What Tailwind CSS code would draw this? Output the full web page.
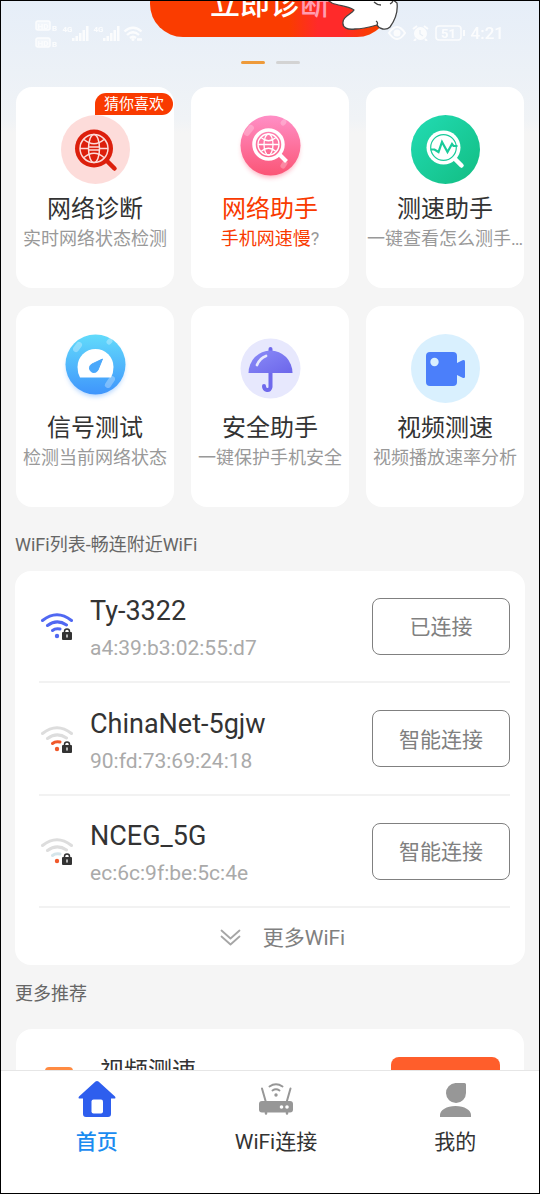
<!DOCTYPE html>
<html lang="zh-CN">
<head>
<meta charset="utf-8">
<meta name="viewport" content="width=device-width, initial-scale=1">
<title>WiFi助手</title>
<script src="https://cdn.jsdelivr.net/npm/@tailwindcss/browser@4"></script>
</head>
<body class="flex h-screen flex-col overflow-hidden border border-black bg-[#f5f5f5] font-['Roboto','Noto_Sans_CJK_SC',sans-serif] text-[#333333]">
<main class="min-h-0 flex-1 overflow-hidden bg-[linear-gradient(#e6eef8_0px,#f0f3f6_118px,#f5f5f5_132px)]">

  <header class="relative flex h-[86px] flex-col items-center overflow-hidden">
    <button type="button" class="-mt-[30px] h-[66px] w-[240px] shrink-0 rounded-full bg-[linear-gradient(90deg,#fa3c00_0%,#fa3c00_58%,#ff2a2a_70%,#ff2a2a_80%,#fa3c00_92%)] text-[30px] leading-[66px] font-medium text-white">立即诊<span class="text-[#ff9db0]">断</span></button>
    <div class="mt-6 flex gap-[11px]">
      <span class="h-[3px] w-6 rounded-full bg-[#ee9a3a]"></span>
      <span class="h-[3px] w-6 rounded-full bg-[#d3d3d3]"></span>
    </div>
    <svg class="absolute top-0 left-[324px] h-8 w-[76px]" viewBox="325 1 76 32" fill="#fff" stroke="#444" stroke-width="1.3" stroke-linejoin="round" aria-hidden="true">
      <path d="M326 -1 L332 3 C339 6 348 6 354 10 C352 14 343 16 343 22 C342 28 348 30 355 29 C362 29 370 27 377 25 C379 29 386 31 390 27 C395 20 398 11 397 3 L392 -1Z"/>
      <path fill="none" d="M377 25 C378 23 378 22 376 21 M374 2 C376 4 378 5 381 5 M390 4 C392 3 393 2 393 0"/>
    </svg>
    <div class="absolute inset-x-0 top-4 flex items-center justify-between pr-[35px] pl-[33px] text-white opacity-85">
      <svg class="h-8 w-[110px]" viewBox="34 17 110 32" fill="#fff" aria-hidden="true">
        <g fill="#fff" fill-opacity=".5" stroke="#fff" stroke-width="1.500"><rect x="36" y="21" width="14" height="9" rx="2"/><rect x="36" y="38" width="14" height="9" rx="2"/></g>
        <g font-family="Roboto" font-weight="700"><g font-size="8"><text x="37.500" y="28.500">HD</text><text x="37.500" y="45.500">HD</text><text x="52" y="31">B</text><text x="52" y="47">B</text></g><g font-size="8"><text x="62.500" y="32">4G</text><text x="93.500" y="32">4G</text></g></g>
        <path d="M72 38h2.500v3h-2.500zM75.500 36h2.500v5h-2.500zM79 33h2.500v8h-2.500zM82.500 30h2.500v11h-2.500zM86 26h2.500v15h-2.500zM103 38h2.500v3h-2.500zM106.500 36h2.500v5h-2.500zM110 33h2.500v8h-2.500zM113.500 30h2.500v11h-2.500zM117 26h2.500v15h-2.500z"/>
        <g fill="none" stroke="#fff" stroke-width="2.300"><path d="M124.500 31.500Q133 24 141.500 31.500M127 35Q133 29.500 139 35M130 38Q133 35.500 136 38M137 39.500h5"/></g><circle cx="133" cy="39.500" r="1.500"/>
      </svg>
      <div class="flex items-center gap-1.5">
        <svg class="h-4 w-[78px]" viewBox="389 25 78 16" fill="none" stroke="#fff" stroke-width="2" aria-hidden="true">
          <path d="M391 33Q399 21 407 33Q399 45 391 33Z"/><circle cx="399" cy="33" r="2.500" fill="#fff"/>
          <circle cx="422.500" cy="33.500" r="5.500" fill="#fff"/><path d="M415 29l4-3M430 29l-4-3M418 39l-2 2M427 39l2 2"/><path stroke="#e8eff6" stroke-width="1.300" d="M422 30v4l3 2"/>
          <rect x="438" y="26" width="25" height="14" rx="3" stroke-width="1.500"/><path d="M466 30v6"/>
          <text x="443" y="38" font-size="13" font-family="Roboto" font-weight="700" fill="#fff" stroke="none">51</text>
        </svg>
        <span class="text-[17px] leading-5 font-medium">4:21</span>
      </div>
    </div>
  </header>

  <section class="grid grid-cols-3 gap-x-[17px] gap-y-[18px] px-[15px]" aria-label="工具">
    <a href="#" class="relative flex h-[201px] flex-col items-center rounded-2xl bg-white pt-7 whitespace-nowrap">
      <span class="absolute top-1.5 right-px h-[22px] rounded-full rounded-bl-none bg-[#f93a00] px-[9px] text-[15px] leading-[23px] text-white">猜你喜欢</span>
      <svg class="size-[69px]" viewBox="0 0 69 69" fill="none" aria-hidden="true">
        <circle cx="34.500" cy="34.500" r="34.500" fill="#fddcda"/>
        <path d="M45 45l8.500 8.500" stroke="#dc1f0c" stroke-width="4.500" stroke-linecap="round"/>
        <circle cx="33" cy="33.500" r="19" fill="#dc1f0c"/>
        <g stroke="#fddcda" stroke-width="1.500"><circle cx="33" cy="33.500" r="14"/><ellipse cx="33" cy="33.500" rx="5.500" ry="14"/><path d="M23 24.500Q33 33 43 24.500M23 42.500Q33 34 43 42.500"/><path d="M19 33.500h8M39 33.500h8M27.500 32h11M27.500 35h11"/></g>
      </svg>
      <h2 class="mt-[7px] text-2xl leading-9">网络诊断</h2>
      <p class="text-lg leading-6 text-[#999999]">实时网络状态检测</p>
    </a>
    <a href="#" class="flex h-[201px] flex-col items-center rounded-2xl bg-white pt-7 whitespace-nowrap">
      <svg class="size-[69px] overflow-visible" viewBox="0 0 69 69" fill="none" aria-hidden="true">
        <defs><linearGradient id="pink" x1="0" y1="0" x2="0" y2="1"><stop stop-color="#ff8fc6"/><stop offset="1" stop-color="#fb5576"/></linearGradient><filter id="soft" x="-30%" y="-30%" width="160%" height="160%"><feGaussianBlur stdDeviation="2.500"/></filter></defs>
        <circle cx="34.500" cy="34" r="28.500" fill="#fb5576" opacity=".45" filter="url(#soft)"/>
        <circle cx="34.500" cy="30.500" r="30" fill="url(#pink)"/>
        <g stroke="#fff" stroke-linecap="round" opacity=".25"><path d="M11 18l4-5" stroke-width="6"/><path d="M47 8l1-1M47 51l2-3" stroke-width="5"/></g>
        <circle cx="32.500" cy="29.500" r="14.500" stroke="#fff" stroke-width="3.500"/><path d="M43 39l7.500 7.500" stroke="#fff" stroke-width="4"/>
        <g stroke="#fff" stroke-width="1.300"><circle cx="32.500" cy="29.500" r="10.500"/><ellipse cx="32.500" cy="29.500" rx="4.500" ry="10.500"/><path d="M25 22.500Q32.500 29 40 22.500M25 36.500Q32.500 30 40 36.500M22 29.500h21"/></g>
      </svg>
      <h2 class="mt-[7px] text-2xl leading-9 text-[#f93a00]">网络助手</h2>
      <p class="text-lg leading-6 text-[#999999]"><span class="text-[#f93a00]">手机网速慢</span>?</p>
    </a>
    <a href="#" class="flex h-[201px] flex-col items-center rounded-2xl bg-white pt-7 whitespace-nowrap">
      <svg class="size-[69px]" viewBox="0 0 69 69" fill="none" aria-hidden="true">
        <defs><linearGradient id="green" x1="0" y1="0" x2="1" y2="1"><stop stop-color="#22dcb4"/><stop offset="1" stop-color="#12bd82"/></linearGradient></defs>
        <circle cx="34.500" cy="34.500" r="34.500" fill="url(#green)"/>
        <path d="M43 43l7.500 7.500" stroke="#fff" stroke-width="4.500" stroke-linecap="round"/>
        <circle cx="32.500" cy="32.500" r="17" fill="#fff"/><circle cx="32.500" cy="32.500" r="12.800" stroke="#19cb9b" stroke-width="1.200"/>
        <path d="M19.500 34.500h4l4 2.500 3.500-10 5.500 10 4.500-8 1.500 2h4" stroke="#19cb9b" stroke-width="2.200"/>
      </svg>
      <h2 class="mt-[7px] text-2xl leading-9">测速助手</h2>
      <p class="text-lg leading-6 text-[#999999]">一键查看怎么测手…</p>
    </a>
    <a href="#" class="flex h-[201px] flex-col items-center rounded-2xl bg-white pt-7 whitespace-nowrap">
      <svg class="size-[69px] overflow-visible" viewBox="0 0 69 69" fill="none" aria-hidden="true">
        <defs><linearGradient id="sky" x1="0" y1="0" x2="0" y2="1"><stop stop-color="#62dbfb"/><stop offset="1" stop-color="#3f95fc"/></linearGradient></defs>
        <circle cx="34.500" cy="34" r="28.500" fill="#3f95fc" opacity=".4" filter="url(#soft)"/>
        <circle cx="34.500" cy="30.500" r="30" fill="url(#sky)"/>
        <g stroke="#fff" stroke-linecap="round" opacity=".3"><path d="M15 15l3-4" stroke-width="6"/><path d="M48 8l1-1" stroke-width="5"/><path d="M47 51l4-6" stroke-width="6"/></g>
        <path d="M19 43.500Q16.500 39 16.500 33A18 18 0 0 1 52.500 33Q52.500 39 50 43.500Z" fill="#fff"/>
        <path d="M41.500 25L31 30A4.500 4.500 0 1 0 37 36Z" fill="#4aa8fb" stroke="#4aa8fb" stroke-linejoin="round"/>
      </svg>
      <h2 class="mt-[7px] text-2xl leading-9">信号测试</h2>
      <p class="text-lg leading-6 text-[#999999]">检测当前网络状态</p>
    </a>
    <a href="#" class="flex h-[201px] flex-col items-center rounded-2xl bg-white pt-7 whitespace-nowrap">
      <svg class="size-[69px]" viewBox="0 0 69 69" fill="none" aria-hidden="true">
        <defs><linearGradient id="violet" x1="0" y1="0" x2="1" y2="1"><stop stop-color="#8b8cf8"/><stop offset="1" stop-color="#6c66ea"/></linearGradient></defs>
        <circle cx="34.500" cy="34.500" r="30" fill="#e7e8fd"/>
        <path d="M34.500 15v38q-.5 3.500-3.500 3t-3-4" stroke="#6f69ec" stroke-width="4" stroke-linecap="round"/>
        <path d="M12.500 39A22 22.500 0 0 1 56.500 39Z" fill="url(#violet)"/>
        <path d="M21 31q3-7 9-9" stroke="#e7e8fd" stroke-width="2.800" stroke-linecap="round"/>
      </svg>
      <h2 class="mt-[7px] text-2xl leading-9">安全助手</h2>
      <p class="text-lg leading-6 text-[#999999]">一键保护手机安全</p>
    </a>
    <a href="#" class="flex h-[201px] flex-col items-center rounded-2xl bg-white pt-7 whitespace-nowrap">
      <svg class="size-[69px]" viewBox="0 0 69 69" aria-hidden="true">
        <circle cx="34.500" cy="34.500" r="34.500" fill="#d9f0fe"/>
        <rect x="15" y="18" width="31" height="34" rx="4" fill="#4b7ffa"/>
        <path d="M45 29.500l6.500-3.300q2.500-1 2.500 1.300v15q0 2.300-2.500 1.300L45 40.500z" fill="#4b7ffa"/>
        <circle cx="23.500" cy="28" r="4.200" fill="#d9f0fe"/>
      </svg>
      <h2 class="mt-[7px] text-2xl leading-9">视频测速</h2>
      <p class="text-lg leading-6 text-[#999999]">视频播放速率分析</p>
    </a>
  </section>

  <h2 class="mt-6 mb-3 px-[14px] text-lg leading-7 text-[#666666]">WiFi列表-畅连附近WiFi</h2>

  <section class="mx-[14px] rounded-2xl bg-white pr-[15px] pl-6">
    <ul>
      <li class="flex h-28 items-center gap-4 border-b-2 border-[#f2f2f2]">
        <svg class="h-7 w-[35px] shrink-0" viewBox="-1 0 35 28" fill="none" stroke-linecap="round" aria-hidden="true">
          <g stroke="#5068f2" stroke-width="3"><path d="M2.500 8.500Q17 -3 31.500 8.500M7.500 13.500Q17 6.500 26.500 13"/><path d="M12.500 18.500Q15.500 16 20 17"/></g>
          <circle cx="17" cy="24" r="2.200" fill="#5068f2"/>
          <rect x="22" y="20" width="10" height="8" rx="1" fill="#333"/><path d="M24.500 21v-1.500a2.500 2.500 0 0 1 5 0V21" stroke="#333" stroke-width="1.500"/><path d="M27 23v2" stroke="#fff" stroke-width="1.300"/>
        </svg>
        <div class="min-w-0 flex-1 pt-2"><h3 class="text-[27px] leading-9">Ty-3322</h3><p class="text-[21px] leading-[38px] text-[#aaaaaa]">a4:39:b3:02:55:d7</p></div>
        <button type="button" class="h-[57px] w-[138px] shrink-0 rounded-lg border border-[#808080] pt-1 text-[21px] text-[#808080]">已连接</button>
      </li>
      <li class="flex h-[113px] items-center gap-4 border-b-2 border-[#f2f2f2]">
        <svg class="h-7 w-[35px] shrink-0" viewBox="-1 0 35 28" fill="none" stroke-linecap="round" aria-hidden="true">
          <g stroke="#dddddd" stroke-width="3"><path d="M2.500 8.500Q17 -3 31.500 8.500M7.500 13.500Q17 6.500 26.500 13"/><path stroke="#f0592b" d="M12.500 18.500Q15.500 16 20 17"/></g>
          <circle cx="17" cy="24" r="2.200" fill="#f0592b"/>
          <rect x="22" y="20" width="10" height="8" rx="1" fill="#333"/><path d="M24.500 21v-1.500a2.500 2.500 0 0 1 5 0V21" stroke="#333" stroke-width="1.500"/><path d="M27 23v2" stroke="#fff" stroke-width="1.300"/>
        </svg>
        <div class="min-w-0 flex-1 pt-2"><h3 class="text-[27px] leading-9">ChinaNet-5gjw</h3><p class="text-[21px] leading-[38px] text-[#aaaaaa]">90:fd:73:69:24:18</p></div>
        <button type="button" class="h-[57px] w-[138px] shrink-0 rounded-lg border border-[#808080] pt-1 text-[21px] text-[#808080]">智能连接</button>
      </li>
      <li class="flex h-28 items-center gap-4 border-b-2 border-[#f2f2f2]">
        <svg class="h-7 w-[35px] shrink-0" viewBox="-1 0 35 28" fill="none" stroke-linecap="round" aria-hidden="true">
          <g stroke="#dddddd" stroke-width="3"><path d="M2.500 8.500Q17 -3 31.500 8.500M7.500 13.500Q17 6.500 26.500 13"/><path stroke="#d5e5ea" d="M12.500 18.500Q15.500 16 20 17"/></g>
          <circle cx="17" cy="24" r="2.200" fill="#f0592b"/>
          <rect x="22" y="20" width="10" height="8" rx="1" fill="#333"/><path d="M24.500 21v-1.500a2.500 2.500 0 0 1 5 0V21" stroke="#333" stroke-width="1.500"/><path d="M27 23v2" stroke="#fff" stroke-width="1.300"/>
        </svg>
        <div class="min-w-0 flex-1 pt-2"><h3 class="text-[27px] leading-9">NCEG_5G</h3><p class="text-[21px] leading-[38px] text-[#aaaaaa]">ec:6c:9f:be:5c:4e</p></div>
        <button type="button" class="h-[57px] w-[138px] shrink-0 rounded-lg border border-[#808080] pt-1 text-[21px] text-[#808080]">智能连接</button>
      </li>
    </ul>
    <button type="button" class="flex h-[57px] w-full items-center justify-center gap-[22px] pt-0.5 pl-4 text-[21px] text-[#808080]">
      <svg class="h-[18px] w-[21px]" viewBox="0 0 21 18" fill="none" stroke="#a6a6a6" stroke-width="1.800" stroke-linecap="round" stroke-linejoin="round" aria-hidden="true"><path d="M1.500 1.500l9 8 9-8M1.500 7.500l9 8 9-8"/></svg>
      <span class="pt-0.5">更多WiFi</span>
    </button>
  </section>

  <h2 class="mt-[15px] mb-[21px] px-[14px] text-lg leading-7 text-[#666666]">更多推荐</h2>
  <section class="mx-[15px] flex h-[120px] items-start rounded-2xl bg-white pr-6 pl-7">
    <svg class="mt-[38px] h-8 w-8 shrink-0" viewBox="0 0 32 32" aria-hidden="true"><rect x="1" width="28" height="30" rx="4" fill="#ff8b42"/></svg>
    <h3 class="ml-6 flex-1 pt-6 text-2xl leading-9">视频测速</h3>
    <button type="button" class="mt-7 h-14 w-[109px] rounded-lg bg-[#ff5e2b] text-[21px] text-white">立即测速</button>
  </section>
</main>

<nav class="h-[123px] shrink-0 overflow-hidden border-t border-[#e6e6e6] bg-white" aria-label="主导航">
  <div class="ml-1.5 grid w-full grid-cols-3 pt-2 text-[21px] leading-[30px]">
    <a href="#" aria-current="page" class="flex flex-col items-center gap-2 font-medium text-[#1b8cf0]">
      <svg class="size-10" viewBox="0 0 40 40" aria-hidden="true"><path d="M18.500 2.500q1.500-1.200 3 0L38 17.500q1.300 2-.8 2H34V35q0 3-3 3H9q-3 0-3-3V19.500H2.800q-2.100 0-.8-2z" fill="#2e5eee"/><rect x="14.500" y="20.500" width="11.500" height="14" rx="2" fill="#fff"/></svg>
      首页
    </a>
    <a href="#" class="flex flex-col items-center gap-2">
      <svg class="size-10" viewBox="0 0 40 40" fill="none" stroke="#979797" stroke-linecap="round" aria-hidden="true"><path d="M6 9.500l4 14M34.500 9.500l-4 14" stroke-width="2"/><rect x="3" y="22" width="34" height="11.500" rx="3" fill="#979797" stroke="none"/><path d="M10 33v1.500M31 33v1.500" stroke-width="2.500"/><path d="M13.500 7.500Q20 3 26.500 7.500M16.500 11.500Q20 9 23.500 11.500" stroke-width="2"/><circle cx="20" cy="16" r="1.700" fill="#979797" stroke="none"/><circle cx="25.500" cy="28" r="1.800" fill="#fff" stroke="none"/><circle cx="31" cy="28" r="1.800" fill="#fff" stroke="none"/></svg>
      WiFi连接
    </a>
    <a href="#" class="flex flex-col items-center gap-2">
      <svg class="size-10" viewBox="0 0 40 40" fill="#979797" aria-hidden="true"><path d="M20.500 4h9q1.500 0 1.500 1.500V14A10 10 0 1 1 20.500 4zM5 38v-2C5 31 11.500 27 20.500 27S36 31 36 36v2z"/></svg>
      我的
    </a>
  </div>
</nav>
</body>
</html>
